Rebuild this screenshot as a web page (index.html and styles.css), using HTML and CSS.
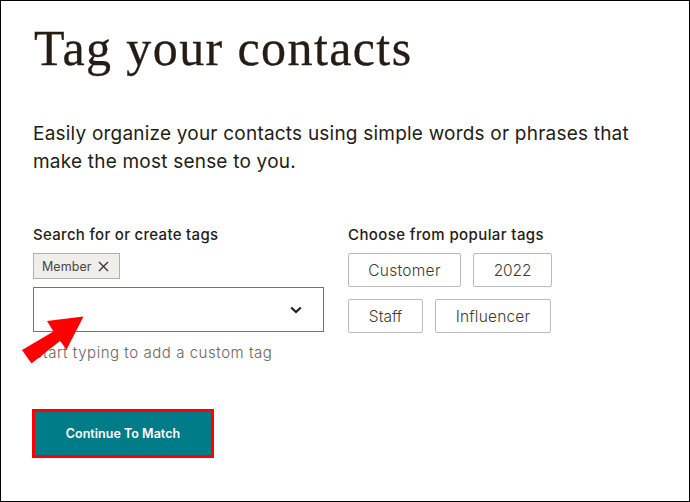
FILE: index.html
```
<!DOCTYPE html>
<html lang="en">
<head>
<meta charset="utf-8">
<title>Tag your contacts</title>
<link rel="stylesheet" href="styles.css">
</head>
<body>
<main class="page">
  <h1 class="title"><span>Tag your contacts</span></h1>
  <p class="intro"><span class="intro-a">Easily organize your contacts using simple words or phrases that</span><br><span class="intro-b">make the most sense to you.</span></p>
  <div class="columns">
    <section class="search">
      <h2 class="label"><span class="label-a">Search for or create tags</span></h2>
      <div class="chip"><span class="chip-text">Member</span>
        <svg class="close" viewBox="0 0 11 11"><path d="M1 1l9 9M10 1l-9 9"/></svg>
      </div>
      <div class="combo">
        <svg class="chevron" viewBox="0 0 12 8"><path d="M1.2 1.4L6 6.1l4.8-4.7"/></svg>
        <svg class="arrow" viewBox="0 0 64 48"><path d="M61.500 .5L25 5l6.500 10.500L0 34l9.500 13.500L38 25l6.600 8.500z"/></svg>
      </div>
      <p class="hint"><span>Start typing to add a custom tag</span></p>
    </section>
    <section class="popular">
      <h2 class="label label-popular"><span class="label-b">Choose from popular tags</span></h2>
      <div class="tags">
        <button class="tag customer"><span>Customer</span></button>
        <button class="tag year"><span>2022</span></button>
      </div>
      <div class="tags">
        <button class="tag staff"><span>Staff</span></button>
        <button class="tag influencer"><span>Influencer</span></button>
      </div>
    </section>
  </div>
  <button class="continue"><span>Continue To Match</span></button>
</main>
</body>
</html>
```
FILE: styles.css
```
* { box-sizing: border-box; }
body { margin: 0; background: #fff; color: #241c15; font-family: Inter, sans-serif; }
h1, h2, p { margin: 0; font-weight: 400; white-space: nowrap; }
button { font-family: inherit; padding: 0; }
.page { width: 690px; height: 502px; border: 1px solid #000; padding: 17px 0 0 32px; }
.title { padding-left: 1px; font: 400 50px/60px "Liberation Serif", serif; letter-spacing: 1.400px; -webkit-text-stroke: .3px #241c15; }
.intro { margin-top: 42px; font-size: 19px; line-height: 28px; letter-spacing: .21px; }
.columns { display: flex; gap: 24px; margin-top: 49px; }
.search { width: 291px; }
.label { font-size: 15px; line-height: 20px; font-weight: 500; letter-spacing: .3px; }
.label-popular { letter-spacing: .4px; }
.chip { display: flex; align-items: center; gap: 6px; width: 87px; height: 26px; margin-top: 8px; padding-left: 8px; border: 1px solid #b5b1aa; background: #efeeea; color: #4c4741; font-size: 12.500px; letter-spacing: .08px; }
.close { width: 11px; height: 11px; fill: none; stroke: #3c3732; stroke-width: 1.400; }
.combo { position: relative; display: flex; align-items: center; justify-content: flex-end; height: 45px; margin-top: 8px; padding-right: 21px; border: 1px solid #77736f; }
.chevron { width: 12px; height: 8px; fill: none; stroke: #241c15; stroke-width: 2.100; }
.arrow { position: absolute; left: -12px; top: 28px; width: 64px; height: 48px; fill: #f00; }
.hint { margin-top: 11px; font-size: 15px; line-height: 20px; letter-spacing: .54px; font-weight: 300; color: #696560; }
.tags { display: flex; gap: 12px; margin-top: 12px; }
.label + .tags { margin-top: 8px; }
.tag { height: 34px; border: 1px solid #bdbbb9; border-radius: 2px; background: #fff; color: #403a34; font-size: 15.500px; font-weight: 300; letter-spacing: .2px; }
.customer { width: 113px; letter-spacing: .3px; }
.year { width: 79px; letter-spacing: -.1px; }
.staff { width: 75px; letter-spacing: 0; }
.influencer { width: 116px; }
.continue { display: block; width: 182px; height: 49px; margin: 46px 0 0 -1px; border: 3px solid #f00; background: #007c89; color: #fff; font-size: 12.500px; font-weight: 600; letter-spacing: .02px; }
```
